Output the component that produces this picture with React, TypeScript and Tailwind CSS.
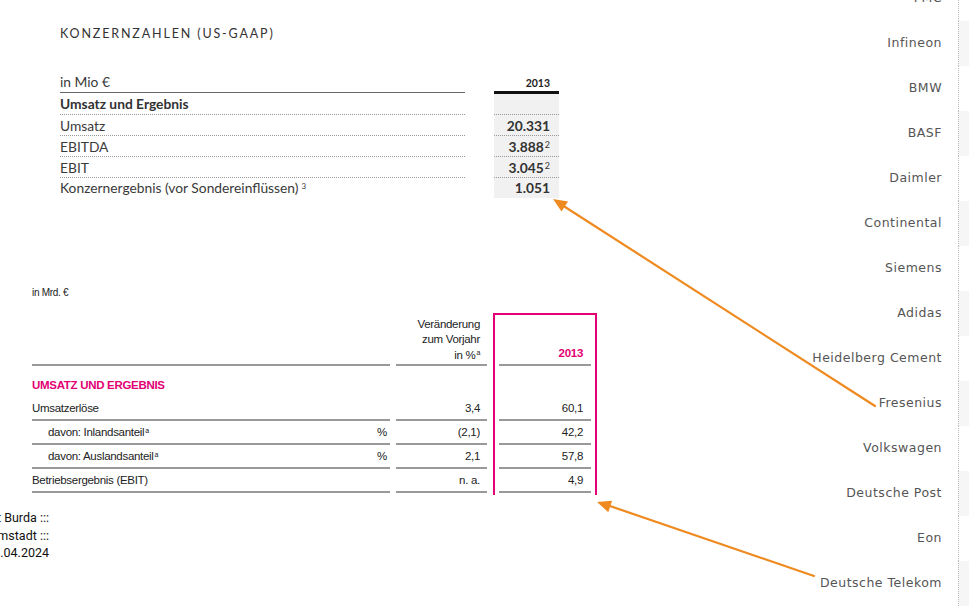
import React from "react";

const companies = [
    "FMC",
    "Infineon",
    "BMW",
    "BASF",
    "Daimler",
    "Continental",
    "Siemens",
    "Adidas",
    "Heidelberg Cement",
    "Fresenius",
    "Volkswagen",
    "Deutsche Post",
    "Eon",
    "Deutsche Telekom",
];

const topRows = [
    { label: "Umsatz", value: "20.331", sup: "" },
    { label: "EBITDA", value: "3.888", sup: "2" },
    { label: "EBIT", value: "3.045", sup: "2" },
];

const lowerRows = [
    { label: "Umsatzerlöse", indent: false, unit: "", change: "3,4", value: "60,1" },
    { label: "davon: Inlandsanteil", indent: true, unit: "%", change: "(2,1)", value: "42,2" },
    { label: "davon: Auslandsanteil", indent: true, unit: "%", change: "2,1", value: "57,8" },
    { label: "Betriebsergebnis (EBIT)", indent: false, unit: "", change: "n. a.", value: "4,9" },
];

function TopTable() {
    return (
        <div className="pl-[60px] pt-[25px] font-['Lato',sans-serif] text-[#3a3a3a]">
            <h2 className="text-[12.5px] leading-[18px] tracking-[1.85px] text-[#333]">KONZERNZAHLEN (US-GAAP)</h2>

            <div className="mt-[30px] grid grid-cols-[405px_65px] gap-x-[29px]">
                {/* header */}
                <div className="h-[20px] border-b border-[#666] text-[13.8px] leading-[17px]">in Mio €</div>
                <div className="h-[21px] border-b-[3px] border-[#111] pr-[9px] text-right text-[10.5px] font-bold leading-[21px] text-[#222]">2013</div>

                {/* section */}
                <div className="h-[21px] border-b border-dotted border-[#999] text-[13.8px] font-bold leading-[20px] text-[#333]">Umsatz und Ergebnis</div>
                <div className="h-[21px] border-b border-dotted border-[#999] bg-[#f1f1f1]" />

                {topRows.map((row) => (
                    <React.Fragment key={row.label}>
                        <div className="h-[21px] border-b border-dotted border-[#999] text-[13.8px] leading-[21px]">{row.label}</div>
                        <div className="h-[21px] border-b border-dotted border-[#999] bg-[#f1f1f1] pr-[9px] text-right text-[13.8px] font-bold leading-[21px] text-[#333]">
                            {row.value}
                            {row.sup && <sup className="ml-[1px] text-[9px] font-normal">{row.sup}</sup>}
                        </div>
                    </React.Fragment>
                ))}

                <div className="h-[20px] text-[13.8px] leading-[20px]">
                    Konzernergebnis (vor Sondereinflüssen)<sup className="ml-[3px] text-[8px]">3</sup>
                </div>
                <div className="h-[20px] bg-[#f1f1f1] pr-[9px] text-right text-[13.8px] font-bold leading-[20px] text-[#333]">1.051</div>
            </div>
        </div>
    );
}

function LowerTable() {
    const cell = "h-[24px] border-b-2 border-[#999] leading-[23px]";
    return (
        <div className="pl-[32px] pt-[89px] font-['Liberation_Sans',sans-serif] text-[11.5px] tracking-[-0.3px] text-[#222]">
            <div className="text-[10px] leading-[12px]">in Mrd. €</div>

            <div className="mt-[15px] flex items-start">
                {/* label column */}
                <div className="w-[358px]">
                    <div className="h-[52px] border-b-2 border-[#999]" />
                    <div className="h-[31px] pt-[12px] text-[11.5px] font-bold leading-[14px] text-[#e20074]">UMSATZ UND ERGEBNIS</div>
                    {lowerRows.map((row) => (
                        <div key={row.label} className={`${cell} flex justify-between pr-[3px] ${row.indent ? "pl-[16px]" : ""}`}>
                            <span>
                                {row.label}
                                {row.indent && <sup className="ml-[1px] text-[7px]">a</sup>}
                            </span>
                            <span>{row.unit}</span>
                        </div>
                    ))}
                </div>

                {/* change column */}
                <div className="ml-[6px] w-[91px]">
                    <div className="flex h-[52px] flex-col justify-end border-b-2 border-[#999] pb-[1px] pr-[7px] text-right leading-[15.5px]">
                        <span>Veränderung</span>
                        <span>zum Vorjahr</span>
                        <span>
                            in %<sup className="ml-[1px] text-[7px]">a</sup>
                        </span>
                    </div>
                    <div className="h-[31px]" />
                    {lowerRows.map((row) => (
                        <div key={row.label} className={`${cell} pr-[7px] text-right`}>{row.change}</div>
                    ))}
                </div>

                {/* highlighted year column */}
                <div className="ml-[6px] -mt-[1px] w-[104px] border-x-2 border-t-2 border-[#e20074] px-[4px]">
                    <div className="flex h-[51px] items-end justify-end border-b-2 border-[#999] pb-[2px] pr-[8px] font-bold text-[#e20074]">2013</div>
                    <div className="h-[31px]" />
                    {lowerRows.map((row) => (
                        <div key={row.label} className={`${cell} pr-[8px] text-right`}>{row.value}</div>
                    ))}
                    <div className="h-[2px]" />
                </div>
            </div>

            <div className="-ml-[103px] mt-[14px] w-[120px] text-right font-['Roboto',sans-serif] text-[12.5px] leading-[17.5px] tracking-normal text-[#111]">
                <div>Hubert Burda :::</div>
                <div>Darmstadt :::</div>
                <div>26.04.2024</div>
            </div>
        </div>
    );
}

function CompanyList() {
    return (
        <div className="-mt-[24px] w-[179px] font-['DejaVu_Sans',sans-serif] text-[12.5px] tracking-[0.5px] text-[#555]">
            {companies.map((name, i) => (
                <div key={name} className="flex h-[45px]">
                    <div className="flex flex-1 items-center justify-end whitespace-nowrap pr-[16px]">{name}</div>
                    <div className={`w-[11px] border-l border-dotted border-[#bbb] ${i % 2 === 1 ? "bg-[#f6f6f6]" : "bg-white"}`} />
                </div>
            ))}
        </div>
    );
}

function Arrows() {
    return (
        <svg className="pointer-events-none absolute inset-0" width="969" height="610" viewBox="0 0 969 610">
            <g stroke="#ee8a1f" strokeWidth="2.2" fill="#ee8a1f" strokeLinecap="round">
                <line x1="875" y1="406" x2="562" y2="205" />
                <polygon points="553,199 561.5,211.6 568,201.5" stroke="none" />
                <line x1="814" y1="576" x2="607" y2="505" />
                <polygon points="597,502 608.3,512.2 612.1,500.8" stroke="none" />
            </g>
        </svg>
    );
}

export default function App() {
    return (
        <div className="relative flex h-[610px] w-[969px] overflow-hidden bg-white">
            <div className="flex-1">
                <TopTable />
                <LowerTable />
            </div>
            <CompanyList />
            <Arrows />
        </div>
    );
}
